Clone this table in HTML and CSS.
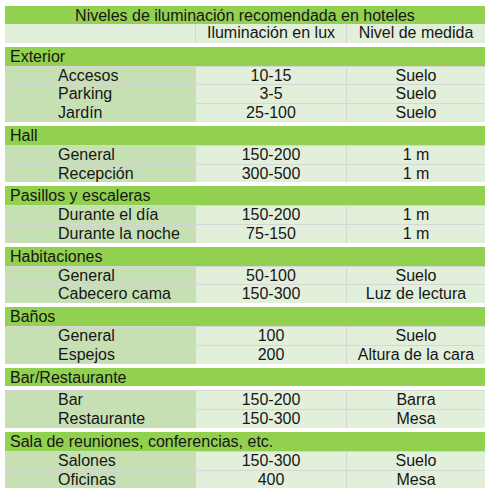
FILE: index.html
```html
<!DOCTYPE html>
<html lang="es">
<head>
<meta charset="utf-8">
<title>Niveles de iluminación</title>
<link rel="stylesheet" href="styles.css">
</head>
<body>
<div class="table">
  <div class="title">Niveles de iluminación recomendada en hoteles</div>
  <div class="row sub"><div class="c1"></div><div class="c2">Iluminación en lux</div><div class="c3">Nivel de medida</div></div>

  <div class="section">
    <div class="head">Exterior</div>
    <div class="row"><div class="c1">Accesos</div><div class="c2">10-15</div><div class="c3">Suelo</div></div>
    <div class="row"><div class="c1">Parking</div><div class="c2">3-5</div><div class="c3">Suelo</div></div>
    <div class="row"><div class="c1">Jardín</div><div class="c2">25-100</div><div class="c3">Suelo</div></div>
  </div>

  <div class="section">
    <div class="head">Hall</div>
    <div class="row"><div class="c1">General</div><div class="c2">150-200</div><div class="c3">1 m</div></div>
    <div class="row"><div class="c1">Recepción</div><div class="c2">300-500</div><div class="c3">1 m</div></div>
  </div>

  <div class="section">
    <div class="head">Pasillos y escaleras</div>
    <div class="row"><div class="c1">Durante el día</div><div class="c2">150-200</div><div class="c3">1 m</div></div>
    <div class="row"><div class="c1">Durante la noche</div><div class="c2">75-150</div><div class="c3">1 m</div></div>
  </div>

  <div class="section">
    <div class="head">Habitaciones</div>
    <div class="row"><div class="c1">General</div><div class="c2">50-100</div><div class="c3">Suelo</div></div>
    <div class="row"><div class="c1">Cabecero cama</div><div class="c2">150-300</div><div class="c3">Luz de lectura</div></div>
  </div>

  <div class="section">
    <div class="head">Baños</div>
    <div class="row"><div class="c1">General</div><div class="c2">100</div><div class="c3">Suelo</div></div>
    <div class="row"><div class="c1">Espejos</div><div class="c2">200</div><div class="c3">Altura de la cara</div></div>
  </div>

  <div class="section">
    <div class="head split">Bar/Restaurante</div>
    <div class="row"><div class="c1">Bar</div><div class="c2">150-200</div><div class="c3">Barra</div></div>
    <div class="row"><div class="c1">Restaurante</div><div class="c2">150-300</div><div class="c3">Mesa</div></div>
  </div>

  <div class="section">
    <div class="head">Sala de reuniones, conferencias, etc.</div>
    <div class="row"><div class="c1">Salones</div><div class="c2">150-300</div><div class="c3">Suelo</div></div>
    <div class="row"><div class="c1">Oficinas</div><div class="c2">400</div><div class="c3">Mesa</div></div>
  </div>
</div>
</body>
</html>
```

FILE: styles.css
```css
html, body {
  margin: 0;
  padding: 0;
  background: #ffffff;
}

body {
  padding: 6px 5px;
  font-family: "Liberation Sans", Arial, sans-serif;
  font-size: 16px;
  color: #161616;
}

.table {
  width: 480px;
  display: flex;
  flex-direction: column;
  gap: 4px;
}

.title {
  background: #92d050;
  height: 18px;
  line-height: 19px;
  text-align: center;
  white-space: nowrap;
}

.sub {
  margin-top: -4px;
}

.section {
  display: flex;
  flex-direction: column;
}

.head {
  background: #92d050;
  height: 18.8px;
  line-height: 19.4px;
  padding-left: 5px;
  white-space: nowrap;
}

.head.split {
  margin-bottom: 4px;
}

.row {
  display: grid;
  grid-template-columns: 190px 150px 138px;
  column-gap: 1px;
  background: #d6d6d6;
  padding-top: 1px;
  height: 18.8px;
  box-sizing: border-box;
}

.row > div {
  line-height: 18.4px;
  white-space: nowrap;
  overflow: hidden;
}

.c1 {
  background: #c6e0b4;
  padding-left: 53px;
}

.sub .c1 {
  background: #e2efda;
}

.c2, .c3 {
  background: #e2efda;
  text-align: center;
}

.sub {
  background: #d6d6d6;
  padding-top: 0;
}
```
